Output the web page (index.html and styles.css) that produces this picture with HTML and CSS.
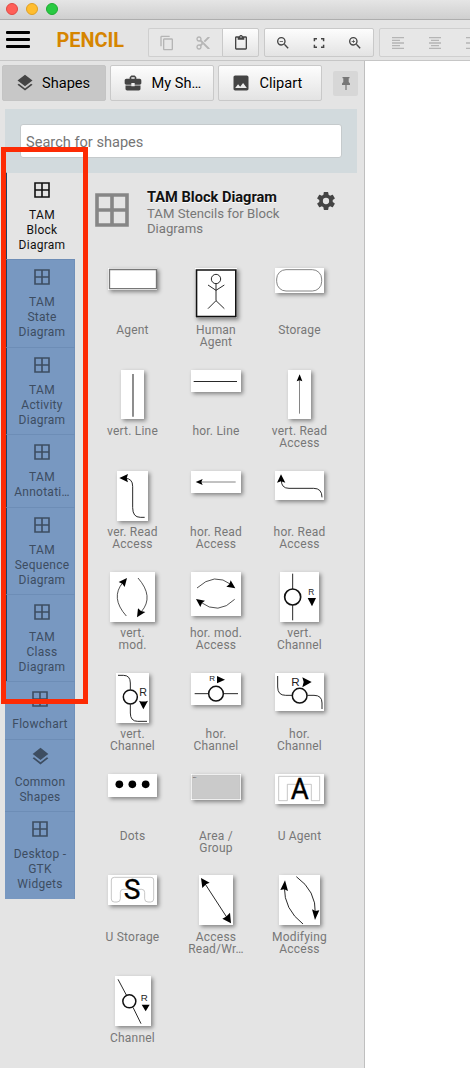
FILE: index.html
```html
<!DOCTYPE html>
<html lang="en">
<head>
<meta charset="utf-8">
<title>Pencil</title>
<link rel="stylesheet" href="styles.css">
</head>
<body>
<svg class="defs" aria-hidden="true">
  <symbol id="grid" viewBox="0 0 16 16"><path d="M1 1H15V15H1ZM8 1V15M1 8H15" fill="none" stroke="currentColor" stroke-width="1.6"/></symbol>
  <symbol id="layers" viewBox="0 0 24 24"><path fill="currentColor" d="M11.99 18.54l-7.37-5.73L3 14.07l9 7 9-7-1.63-1.27-7.38 5.74zM12 16l7.36-5.73L21 9l-9-7-9 7 1.63 1.27L12 16z"/></symbol>
</svg>
<header class="titlebar"><i class="dot red"></i><i class="dot yellow"></i><i class="dot green"></i></header>
<div class="toolbar">
  <div class="burger"><i></i><i></i><i></i></div>
  <h1 class="brand">PENCIL</h1>
  <div class="group edit off">
    <svg viewBox="0 0 24 24"><path d="M16 1H4c-1.1 0-2 .9-2 2v14h2V3h12V1zm3 4H8c-1.1 0-2 .9-2 2v14c0 1.1.9 2 2 2h11c1.1 0 2-.9 2-2V7c0-1.1-.9-2-2-2zm0 16H8V7h11v14z"/></svg>
    <svg viewBox="0 0 24 24"><path d="M9.64 7.64c.23-.5.36-1.05.36-1.64 0-2.21-1.79-4-4-4S2 3.79 2 6s1.79 4 4 4c.59 0 1.14-.13 1.64-.36L10 12l-2.36 2.36C7.14 14.13 6.59 14 6 14c-2.21 0-4 1.79-4 4s1.79 4 4 4 4-1.79 4-4c0-.59-.13-1.14-.36-1.64L12 14l7 7h3v-1L9.64 7.64zM6 8a2 2 0 110-4 2 2 0 010 4zm0 12a2 2 0 110-4 2 2 0 010 4zm6-7.500a.5.5 0 110-1 .5.5 0 010 1zM19 3l-6 6 2 2 7-7V3z"/></svg>
  </div>
  <div class="group paste"><svg viewBox="0 0 24 24"><path d="M19 2h-4.180C14.400.84 13.300 0 12 0S9.600.84 9.180 2H5c-1.100 0-2 .9-2 2v16c0 1.100.9 2 2 2h14c1.100 0 2-.9 2-2V4c0-1.100-.9-2-2-2zm-7 0a1 1 0 110 2 1 1 0 010-2zm7 18H5V4h2v3h10V4h2v16z"/></svg></div>
  <div class="group view">
    <svg viewBox="0 0 24 24"><path d="M15.500 14h-.79l-.28-.27A6.470 6.470 0 0016 9.500 6.500 6.500 0 109.500 16c1.610 0 3.090-.59 4.230-1.570l.27.28v.79l5 4.990L20.490 19l-4.990-5zm-6 0a4.500 4.500 0 110-9 4.500 4.500 0 010 9zM7 9h5v1H7z"/></svg>
    <svg viewBox="0 0 24 24"><path d="M4 4.500h5v2.200H6.200V9.500H4zM15 4.500h5v5h-2.200V6.700H15zM4 14.500h2.200v2.800H9v2.200H4zM17.800 14.500H20v5h-5v-2.200h2.800z"/></svg>
    <svg viewBox="0 0 24 24"><path d="M15.500 14h-.79l-.28-.27A6.470 6.470 0 0016 9.500 6.500 6.500 0 109.500 16c1.610 0 3.090-.59 4.230-1.570l.27.28v.79l5 4.990L20.490 19l-4.990-5zm-6 0a4.500 4.500 0 110-9 4.500 4.500 0 010 9zM7 9h2V7h1v2h2v1h-2v2H9v-2H7z"/></svg>
  </div>
  <div class="group align off">
    <svg viewBox="0 0 24 24"><path d="M3 3h18v2H3zM3 7h12v2H3zM3 11h18v2H3zM3 15h12v2H3zM3 19h18v2H3z"/></svg>
    <svg viewBox="0 0 24 24"><path d="M3 3h18v2H3zM6 7h12v2H6zM3 11h18v2H3zM6 15h12v2H6zM3 19h18v2H3z"/></svg>
    <svg viewBox="0 0 24 24"><path d="M3 3h18v2H3zM9 7h12v2H9zM3 11h18v2H3zM9 15h12v2H9zM3 19h18v2H3z"/></svg>
  </div>
</div>
<main class="workspace">
  <section class="panel">
    <nav class="tabs">
      <button class="tab active"><svg><use href="#layers"/></svg>Shapes</button>
      <button class="tab"><svg viewBox="0 0 24 24"><path d="M10 16v-1H3.010L3 19c0 1.110.89 2 2 2h14c1.110 0 2-.89 2-2v-4h-7v1h-4zm10-9h-4.010V5l-2-2h-4l-2 2v2H4c-1.100 0-2 .9-2 2v3c0 1.110.89 2 2 2h6v-2h4v2h6c1.100 0 2-.9 2-2V9c0-1.100-.9-2-2-2zm-6 0h-4V5h4v2z"/></svg>My Sh…</button>
      <button class="tab"><svg viewBox="0 0 24 24"><path d="M21 19V5c0-1.100-.9-2-2-2H5c-1.100 0-2 .9-2 2v14c0 1.100.9 2 2 2h14c1.100 0 2-.9 2-2zM8.500 13.500l2.500 3.010L14.500 12l4.500 6H5l3.500-4.500z"/></svg>Clipart</button>
      <span class="pin"><svg viewBox="0 0 8 13"><path d="M.5 0h7v1.300H6.700V5L8 6.500V8H4.600v5H3.400V8H0V6.500L1.300 5V1.300H.5z"/></svg></span>
    </nav>
    <div class="search"><div class="field">Search for shapes</div></div>
    <div class="content">
      <div class="side">
        <div class="cat tam current"><svg><use href="#grid"/></svg>TAM<br>Block<br>Diagram</div>
        <div class="cat tam"><svg><use href="#grid"/></svg>TAM<br>State<br>Diagram</div>
        <div class="cat tam"><svg><use href="#grid"/></svg>TAM<br>Activity<br>Diagram</div>
        <div class="cat tam"><svg><use href="#grid"/></svg>TAM<br>Annotati…</div>
        <div class="cat tam"><svg><use href="#grid"/></svg>TAM<br>Sequence<br>Diagram</div>
        <div class="cat tam"><svg><use href="#grid"/></svg>TAM<br>Class<br>Diagram</div>
        <div class="cat"><svg><use href="#grid"/></svg>Flowchart</div>
        <div class="cat"><svg class="wide"><use href="#layers"/></svg>Common<br>Shapes</div>
        <div class="cat"><svg><use href="#grid"/></svg>Desktop -<br>GTK<br>Widgets</div>
      </div>
      <div class="collection">
        <div class="head">
          <svg class="big" viewBox="0 0 34 34"><path d="M2 2H32V32H2ZM17 2V32M2 17H32" fill="none" stroke="#868686" stroke-width="3.6"/></svg>
          <div class="about"><h2>TAM Block Diagram</h2><p>TAM Stencils for Block<br>Diagrams</p></div>
          <svg class="gear" viewBox="2 2 20 20"><path d="M19.430 12.980c.04-.32.07-.64.07-.98s-.03-.66-.07-.98l2.110-1.650c.19-.15.24-.42.12-.64l-2-3.460c-.12-.22-.39-.3-.61-.22l-2.490 1c-.52-.4-1.080-.73-1.690-.98l-.38-2.650A.488.488 0 0014 2h-4c-.25 0-.46.18-.49.42l-.38 2.650c-.61.25-1.170.59-1.690.98l-2.490-1c-.23-.09-.49 0-.61.22l-2 3.460c-.13.22-.07.49.12.64l2.110 1.650c-.04.32-.07.65-.07.98s.03.66.07.98l-2.110 1.650c-.19.15-.24.42-.12.64l2 3.460c.12.22.39.3.61.22l2.490-1c.52.4 1.080.73 1.690.98l.38 2.650c.03.24.24.42.49.42h4c.25 0 .46-.18.49-.42l.38-2.650c.61-.25 1.170-.59 1.690-.98l2.490 1c.23.09.49 0 .61-.22l2-3.460c.12-.22.07-.49-.12-.64l-2.110-1.650zM12 15.500a3.500 3.500 0 110-7 3.500 3.500 0 010 7z"/></svg>
        </div>
        <div class="shapes">
          <figure><svg width="49" height="22" viewBox="39 39 147 66"><path class="g" stroke-width="4" d="M43.500 43.500H184.500V101H43.500Z"/></svg><figcaption>Agent</figcaption></figure>
          <figure><svg width="42" height="50" viewBox="300 39 126 150"><path stroke-width="5" d="M304.500 45H422.500V185H304.500Z"/><circle cx="363" cy="72" r="14"/><path d="M363 86V137M339 90L363 106L388 90M339 161L363 137L388 161"/></svg><figcaption>Human<br>Agent</figcaption></figure>
          <figure><svg width="49" height="25" viewBox="540 39 147 75"><rect class="g" x="545" y="44" width="135" height="64" rx="28"/></svg><figcaption>Storage</figcaption></figure>
          <figure><svg width="23" height="49" viewBox="78 345 69 147"><path class="g" stroke-width="5" d="M114 357V485"/></svg><figcaption>vert. Line</figcaption></figure>
          <figure><svg width="50" height="22" viewBox="288 345 150 66"><path d="M296 379.500H426"/></svg><figcaption>hor. Line</figcaption></figure>
          <figure><svg width="23" height="49" viewBox="579 345 69 147"><path class="g" d="M613.500 370V476"/><path class="f" d="M614 358L622 379L614 376L605 379Z"/></svg><figcaption>vert. Read<br>Access</figcaption></figure>
          <figure><svg width="31" height="50" viewBox="66 48 93 150"><path d="M90 70Q113 70 113 94V158Q113 187 136 187H149"/><path class="f" d="M73 69L99 57L95 70L99 82Z"/></svg><figcaption>ver. Read<br>Access</figcaption></figure>
          <figure><svg width="50" height="22" viewBox="288 48 150 66"><path class="g" d="M318 81H422"/><path class="f" d="M302 81L323 72L319 81L323 90Z"/></svg><figcaption>hor. Read<br>Access</figcaption></figure>
          <figure><svg width="49" height="29" viewBox="540 48 147 87"><path d="M559 76Q559 100 582 100H656Q681 100 681 127"/><path class="f" d="M558 58L571 83L558 79L546 83Z"/></svg><figcaption>hor. Read<br>Access</figcaption></figure>
          <figure><svg width="45" height="50" viewBox="45 351 135 150"><path class="t" d="M94 483Q45 428 84 382M129 369Q178 425 139 470"/><path class="f" d="M96 369L89 396L82 386L71 381ZM126 487L129 460L138 468L151 471Z"/></svg><figcaption>vert.<br>mod.</figcaption></figure>
          <figure><svg width="50" height="44" viewBox="288 351 150 132"><path class="t" d="M306 399Q359 350 409 389M419 433Q370 482 316 441"/><path class="f" d="M421 400L394 395L403 388L407 376ZM303 432L330 437L321 444L316 456Z"/></svg><figcaption>hor. mod.<br>Access</figcaption></figure>
          <figure><svg width="39" height="50" viewBox="555 351 117 150"><path d="M593 356V402M593 450V496"/><circle cx="593" cy="426" r="24" stroke-width="5"/><text x="640" y="420" font-size="25">R</text><path class="f" d="M638 429H663L651 454Z"/></svg><figcaption>vert.<br>Channel</figcaption></figure>
          <figure><svg width="33" height="50" viewBox="63 54 99 150"><path d="M69 61H85Q106 61 106 84V104M106 148V174Q106 199 128 199H156"/><circle cx="106" cy="126" r="21" stroke-width="4.500"/><text x="133" y="122" font-size="32">R</text><path class="f" d="M132 137Q145 142 159 137L145 163Z"/></svg><figcaption>vert.<br>Channel</figcaption></figure>
          <figure><svg width="50" height="32" viewBox="288 54 150 96"><path d="M299 116H342M386 116H429"/><circle cx="363" cy="116" r="22" stroke-width="4.500"/><text x="343" y="79" font-size="24">R</text><path class="f" d="M366 63L390 74L366 85Z"/></svg><figcaption>hor.<br>Channel</figcaption></figure>
          <figure><svg width="49" height="38" viewBox="540 54 147 114"><path d="M548 63V96Q548 121 572 121H592M637 121H657Q681 121 681 144V162"/><circle cx="614" cy="122" r="22" stroke-width="4.500"/><text x="589" y="93" font-size="35">R</text><path class="f" d="M622 67L650 81L622 97L626 81Z"/></svg><figcaption>hor.<br>Channel</figcaption></figure>
          <figure><svg width="49" height="23" viewBox="39 357 147 69"><g class="f"><circle cx="73" cy="388" r="11.500"/><circle cx="112" cy="388" r="11.500"/><circle cx="152" cy="388" r="11.500"/></g></svg><figcaption>Dots</figcaption></figure>
          <figure><svg width="50" height="26" viewBox="288 357 150 78"><path class="area" d="M291 360H435V432H291Z"/><text x="293" y="368" font-size="6">Title</text></svg><figcaption>Area /<br>Group</figcaption></figure>
          <figure><svg width="49" height="30" viewBox="540 357 147 90"><path class="l" d="M551 364H674V437H649V388H577V437H551Z"/><text x="614" y="433" font-size="86" text-anchor="middle" textLength="54" lengthAdjust="spacingAndGlyphs" class="letter">A</text></svg><figcaption>U Agent</figcaption></figure>
          <figure><svg width="49" height="30" viewBox="39 60 147 90"><path class="l" d="M58 67H168Q176 67 176 75V132Q176 141 167 141H159Q149 141 149 131V112Q149 103 140 103H84Q76 103 76 112V131Q76 141 66 141H58Q49 141 49 132V75Q49 67 58 67Z"/><text x="111" y="133" font-size="84" text-anchor="middle" textLength="50" lengthAdjust="spacingAndGlyphs" class="letter">S</text></svg><figcaption>U Storage</figcaption></figure>
          <figure><svg width="34" height="50" viewBox="312 60 102 150"><path d="M326 80L400 194"/><path class="f" d="M318 69L344 83L333 88L322 99ZM408 205L382 191L393 185L405 173Z"/></svg><figcaption>Access<br>Read/Wr…</figcaption></figure>
          <figure><svg width="41" height="50" viewBox="552 60 123 150"><path d="M624 207Q567 163 568 96M604 65Q664 108 661 176"/><path class="f" d="M570 76L579 108L568 103L556 105ZM660 195L651 163L661 168L673 166Z"/></svg><figcaption>Modifying<br>Access</figcaption></figure>
          <figure><svg width="36" height="50" viewBox="60 363 108 150"><path d="M69 373L94 420M114 457L138 506"/><circle cx="103" cy="439" r="19.500" stroke-width="4.500"/><text x="137" y="438" font-size="29">R</text><path class="f" d="M140 449H164L152 469Z"/></svg><figcaption>Channel</figcaption></figure>
        </div>
      </div>
    </div>
  </section>
  <section class="canvas"></section>
</main>
<div class="highlight"></div>
</body>
</html>
```
FILE: styles.css
```css
* { box-sizing: border-box; }
body { margin: 0; width: 470px; height: 1068px; overflow: hidden; position: relative; display: flex; flex-direction: column; background: #e4e4e4; font-family: Roboto, "Liberation Sans", sans-serif; color: #111; }
.defs { position: absolute; width: 0; height: 0; }
.titlebar { height: 20px; flex: none; background: linear-gradient(#e5e5e5, #cfcfcf); border-bottom: 1px solid #aeaeae; display: flex; gap: 8px; padding: 3px 6px; }
.dot { width: 12px; height: 12px; border-radius: 50%; border: 1px solid #e04943; background: #ff5f57; }
.yellow { background: #ffbd2e; border-color: #dfa023; }
.green { background: #28ca42; border-color: #1eab31; }
.toolbar { height: 41px; flex: none; display: flex; align-items: flex-start; border-bottom: 1px solid #c6c6c6; padding: 8px 0 0 6px; overflow: hidden; }
.burger { width: 24px; display: flex; flex-direction: column; gap: 4px; padding-top: 3px; flex: none; }
.burger i { height: 3px; border-radius: 1px; background: #000; }
.brand { margin: 0; width: 91px; flex: none; padding: 1px 0 0 26.500px; font-size: 19.900px; line-height: 23px; font-weight: 700; color: #d68500; }
.group { height: 29px; flex: none; display: flex; align-items: center; justify-content: space-around; border: 1px solid #c9c9c9; border-radius: 2px; background: linear-gradient(#fdfdfd, #e3e3e3); fill: #444; }
.group svg { width: 16px; height: 16px; }
.off { background: #e7e7e7; fill: #b5b5b5; border-color: #cfcfcf; }
.edit { width: 74px; margin-left: 27px; padding-right: 1px; border-right: 0; border-radius: 2px 0 0 2px; }
.paste { width: 37px; border-radius: 0 2px 2px 0; }
.view { width: 110px; margin-left: 5px; }
.align { width: 112px; margin-left: 5px; }
.workspace { flex: 1; display: flex; min-height: 0; }
.panel { width: 365px; flex: none; border-right: 1px solid #bfbfbf; padding-top: 4px; }
.canvas { flex: 1; background: #fff; }
.tabs { display: flex; gap: 4px; padding-left: 2px; height: 44px; }
.tab { width: 104px; height: 36px; border: 1px solid #c9c9c9; border-radius: 2px; background: linear-gradient(#fdfdfd, #e3e3e3); display: flex; align-items: center; padding: 0 0 0 12px; gap: 8.500px; font: 14.600px Roboto, sans-serif; color: #000; fill: #444; text-shadow: 0 1px #fff; white-space: nowrap; }
.tab svg { width: 20px; height: 20px; color: #444; flex: none; }
.tab.active { gap: 7px; background: #c7c7c7; border-color: #c4c4c4; text-shadow: 0 1px #ddd; }
.pin { width: 25px; height: 25px; margin: 6px 0 0 7px; background: #d7d7d7; border-radius: 2px; display: flex; align-items: center; justify-content: center; fill: #777; }
.pin svg { width: 8px; height: 13px; }
.search { margin: 0 7px 0 5px; height: 64px; padding: 15px; background: #d2dadd; }
.field { height: 34px; border: 1px solid #c5cacc; border-radius: 3px; background: #fff; padding: 0 5px; font-size: 14.600px; line-height: 35px; color: #757575; }
.content { display: flex; padding-left: 5px; margin-top: -1px; }
.side { width: 70px; flex: none; }
.cat { background: #7898c1; padding: 9px 0 6.400px; text-align: center; font-size: 12px; line-height: 15px; letter-spacing: .26px; color: #3d4d61; border-top: 1px solid #6d8db6; box-shadow: inset -1px 0 #7090b9; }
.cat svg { display: block; width: 16px; height: 16px; margin: 0 auto 10px; }
.cat svg.wide { width: 21px; height: 21px; margin: -2.500px auto 7.500px; }
.tam { border-left: 2px solid #1f4266; padding-left: 2px; }
.current { background: #e4e4e4; border-top-color: transparent; color: #111; box-shadow: none; background-clip: padding-box; }
.collection { flex: 1; }
.head { display: flex; height: 96.400px; padding: 17px 0 0 20px; }
.big { width: 34px; height: 34px; margin-top: 4px; flex: none; }
.about { width: 158px; padding-left: 18px; flex: none; white-space: nowrap; }
h2 { margin: 0; font-size: 14.600px; line-height: 17px; font-weight: 700; color: #111; text-shadow: 0 1px #fff; }
.about p { margin: 0; font-size: 13.150px; line-height: 15px; color: #777; }
.gear { width: 18px; height: 18px; margin: 3px 0 0 30px; fill: #444; }
.shapes { margin-left: 15.500px; display: grid; grid-template-columns: 84px 83px 84px; grid-auto-rows: 101.150px; }
figure { margin: 0; text-align: center; display: grid; grid-template-rows: 55.500px auto; align-items: start; }
figure svg { display: block; overflow: visible; margin: 0 auto; background: #fff; box-shadow: 1.500px 1.500px 4px rgba(0,0,0,.42); fill: none; stroke: #111; stroke-width: 2.700; }
figure .g { stroke: #777; }
figure .t { stroke-width: 2.200; }
figure .l { stroke: #aaa; stroke-width: 2; }
figure .f { fill: #000; stroke: none; }
figure .area { fill: #cacaca; stroke: #bdbdbd; stroke-width: 1.500; }
figure text { fill: #222; stroke: none; font-family: "Liberation Sans", sans-serif; }
figure .letter { fill: #000; stroke: #000; stroke-width: 1; font-family: Roboto, sans-serif; }
figcaption { font-size: 12px; line-height: 12px; letter-spacing: .2px; color: #777; }
.highlight { position: absolute; left: 1px; top: 147px; width: 87px; height: 557px; border: 5px solid #fd2b04; }
```
